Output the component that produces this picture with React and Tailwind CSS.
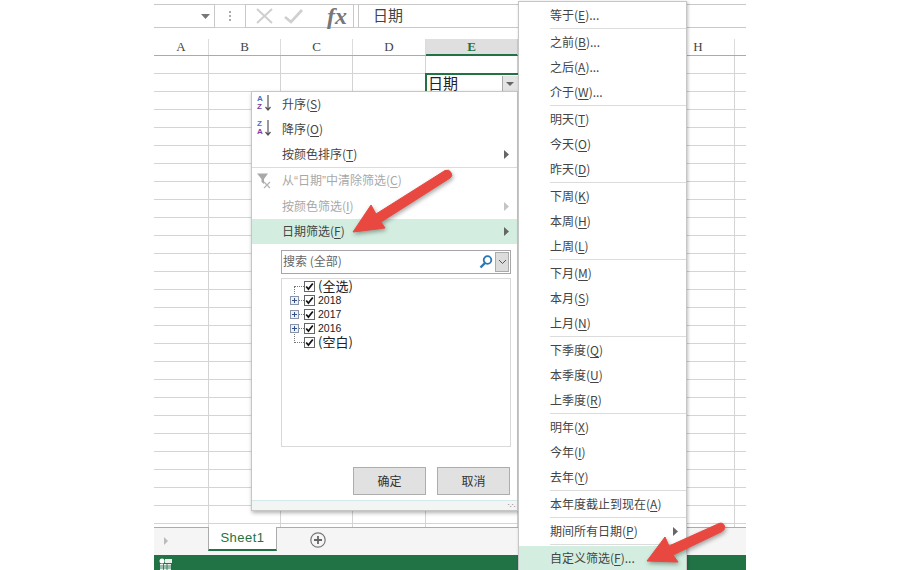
const FONT = "font-['Noto_Sans_CJK_SC','Noto_Sans',sans-serif]";

const columns = [
  ["A", "w-[55px]"], ["B", "w-[72px]"], ["C", "w-[72px]"], ["D", "w-[73px]"],
  ["E", "w-[92px]"], ["F", "w-[72px]"], ["G", "w-[72px]"], ["H", "w-[73px]"],
];

function Label({ pre, k, post = ")", extra = "" }) {
  return <span>{pre}(<span className="underline underline-offset-2 decoration-[0.5px]">{k}</span>{post}{extra}</span>;
}

function Tri({ className = "bg-[#666]" }) {
  return <span className={`absolute right-2 top-[8px] w-[5px] h-[9px] [clip-path:polygon(0_0,100%_50%,0_100%)] ${className}`} />;
}

function MenuItem({ pre, k, extra, icon, arrow, disabled, active, indent = "pl-[30px] pb-[2px]" }) {
  return (
    <div className={`relative h-[25px] shrink-0 flex items-center ${indent} text-xs ${disabled ? "text-[#a8a8a8]" : "text-[#444]"} ${active ? "bg-[#d3eee0]" : ""}`}>
      {icon}
      <Label pre={pre} k={k} extra={extra} />
      {arrow && <Tri className={disabled ? "bg-[#c4c4c4]" : "bg-[#666]"} />}
    </div>
  );
}

function Sep({ left = "ml-[31px]" }) {
  return <div className={`h-[2px] shrink-0 ${left} border-t border-[#dcdcdc]`} />;
}

function SortIcon({ top, bottom }) {
  return (
    <span className="absolute left-[5px] top-[2px] w-[16px] h-[19px] font-['Liberation_Sans',sans-serif] font-bold text-[8px] leading-[8px]">
      <span className="absolute left-0 top-[1px] text-[#4472c4]">{top}</span>
      <span className="absolute left-0 top-[9px] text-[#7a3fa8]">{bottom}</span>
      <svg className="absolute left-[7px] top-0" width="8" height="18" viewBox="0 0 8 18">
        <path d="M4 1v15M1.500 13l2.500 3 2.500-3" fill="none" stroke="#555" strokeWidth="1.200" />
      </svg>
    </span>
  );
}

function ClearIcon() {
  return (
    <svg className="absolute left-[4px] top-[3px]" width="18" height="18" viewBox="0 0 18 18">
      <path d="M1 1.500h11L8 7v5L5.500 10V7z" fill="#a9a9a9" />
      <path d="M8 10l6 6M14 10l-6 6" stroke="#b5b5b5" strokeWidth="1.300" fill="none" />
    </svg>
  );
}

function TreeRow({ label, plus, first, last, small }) {
  return (
    <div className="relative h-[14px] flex items-center pl-[22px]">
      {plus ? (
        <span className="absolute left-[8px] top-[3px] w-[9px] h-[9px] border border-[#8a94a8] bg-[#eef1f6]">
          <span className="absolute left-[1px] top-[3px] w-[5px] h-px bg-[#33508a]" />
          <span className="absolute left-[3px] top-[1px] w-px h-[5px] bg-[#33508a]" />
        </span>
      ) : (
        <span className={`absolute left-[12px] w-[10px] border-l border-b border-dotted border-[#777] ${first ? "top-[7px] h-[8px] border-t border-b-0" : last ? "top-[-1px] h-[9px]" : ""}`} />
      )}
      {plus && <span className="absolute left-[17px] top-[7px] w-[5px] border-t border-dotted border-[#777]" />}
      <span className="relative w-[11px] h-[11px] border border-[#666] bg-white shrink-0">
        <svg className="absolute left-0 top-0" width="9" height="9" viewBox="0 0 9 9">
          <path d="M1.200 4.500l2.200 2.600L7.800 1.400" fill="none" stroke="#111" strokeWidth="1.700" />
        </svg>
      </span>
      <span className={`ml-[3px] text-[#222] ${small ? "text-[10.5px] leading-none font-['Liberation_Sans',sans-serif]" : "text-[13px] leading-none pb-[2px]"}`}>{label}</span>
    </div>
  );
}

function FilterMenu() {
  const clearLabel = <>从<span className="font-['Liberation_Sans',sans-serif]">“</span>日期<span className="font-['Liberation_Sans',sans-serif]">”</span>中清除筛选</>;
  return (
    <div className={`absolute left-[251px] top-[91px] w-[267px] h-[420px] bg-white border border-[#c6c6c6] shadow-[1px_2px_4px_rgba(0,0,0,0.3)] flex flex-col ${FONT}`}>
      <MenuItem pre="升序" k="S" icon={<SortIcon top="A" bottom="Z" />} />
      <MenuItem pre="降序" k="O" icon={<SortIcon top="Z" bottom="A" />} />
      <MenuItem pre="按颜色排序" k="T" arrow />
      <Sep left="ml-0" />
      <MenuItem pre={clearLabel} k="C" disabled icon={<ClearIcon />} />
      <MenuItem pre="按颜色筛选" k="I" arrow disabled />
      <MenuItem pre="日期筛选" k="F" arrow active />
      <div className="ml-[29px] mt-[6px] w-[230px] h-[24px] border border-[#a6a6a6] flex items-center justify-between pl-px pr-px text-xs text-[#666]">
        <span className="pb-[2px]">搜索 (全部)</span>
        <span className="flex items-center gap-[1px]">
          <svg width="16" height="16" viewBox="0 0 16 16">
            <circle cx="9.500" cy="6" r="3.800" fill="none" stroke="#2a77b5" strokeWidth="1.800" />
            <path d="M7 9l-4.500 4.500" stroke="#2a77b5" strokeWidth="2.400" />
          </svg>
          <span className="w-[14px] h-[20px] bg-[#dcdcdc] border border-[#ababab] flex items-center justify-center">
            <svg width="9" height="6" viewBox="0 0 9 6"><path d="M1 1l3.500 3.500L8 1" fill="none" stroke="#555" /></svg>
          </span>
        </span>
      </div>
      <div className="ml-[29px] mt-[4px] w-[230px] h-[169px] border border-[#d9d9d9]">
        <TreeRow label="(全选)" first />
        <TreeRow label="2018" plus small />
        <TreeRow label="2017" plus small />
        <TreeRow label="2016" plus small />
        <TreeRow label="(空白)" last />
      </div>
      <div className="mt-[20px] pl-[101px] flex gap-[11px] text-xs text-[#333]">
        <button className="w-[73px] h-[28px] bg-[#e1e1e1] border border-[#adadad]">确定</button>
        <button className="w-[73px] h-[28px] bg-[#e1e1e1] border border-[#adadad]">取消</button>
      </div>
      <div className="relative mt-[5px] flex-1 bg-[#f3f5f5] border-t border-[#d5e8ea]">
        <span className="absolute right-[2px] bottom-[1px] text-[7px] leading-[7px] text-[#999] tracking-[-1px]">⠢⠢</span>
      </div>
    </div>
  );
}

function DateMenu() {
  const groups = [
    [["等于", "E", "..."]],
    [["之前", "B", "..."], ["之后", "A", "..."], ["介于", "W", "..."]],
    [["明天", "T"], ["今天", "O"], ["昨天", "D"]],
    [["下周", "K"], ["本周", "H"], ["上周", "L"]],
    [["下月", "M"], ["本月", "S"], ["上月", "N"]],
    [["下季度", "Q"], ["本季度", "U"], ["上季度", "R"]],
    [["明年", "X"], ["今年", "I"], ["去年", "Y"]],
    [["本年度截止到现在", "A"]],
    [["期间所有日期", "P", "", true]],
  ];
  return (
    <div className={`absolute left-[518px] top-[1px] w-[169px] h-[569px] bg-white border-x border-t border-[#c6c6c6] shadow-[1px_1px_3px_rgba(0,0,0,0.25)] flex flex-col pt-px ${FONT}`}>
      {groups.map((g, i) => (
        <div key={i} className="flex flex-col shrink-0">
          {g.map(([p, k, e, a]) => <MenuItem key={p} pre={p} k={k} extra={e} arrow={a} indent="pl-[31px] pb-px" />)}
          <Sep />
        </div>
      ))}
      <MenuItem pre="自定义筛选" k="F" extra="..." active indent="pl-[31px] pb-px" />
    </div>
  );
}

function Arrows() {
  return (
    <svg className="absolute left-0 top-0 drop-shadow-[1px_2px_2px_rgba(0,0,0,0.35)]" width="900" height="570" viewBox="0 0 900 570">
      <path d="M353 232L371 205L376 214L445 170.500Q449 169 451 172.500Q453 176 450 178L381 222L385 228Z" fill="#e8483f" stroke="#e8483f" strokeLinejoin="round" />
      <path d="M647 561L665 537L669 546L719 523.500Q723 522 724.500 526Q725 530 722 531.500L673 555L678 562Z" fill="#e8483f" stroke="#e8483f" strokeLinejoin="round" />
    </svg>
  );
}

function Toolbar() {
  return (
    <div className="h-[39px] shrink-0 pt-[4px]">
      <div className="h-[24px] flex border-y border-[#d0d0d0]">
        <div className="w-[61px] border-r border-[#c8c8c8] relative bg-white -mt-px -mb-px border-y">
          <span className="absolute right-[4px] top-[9px] w-[9px] h-[5px] bg-[#777] [clip-path:polygon(0_0,100%_0,50%_100%)]" />
        </div>
        <div className="w-[30px] flex flex-col items-center justify-center gap-[2px]">
          <span className="w-[2px] h-[2px] bg-[#aaa]" /><span className="w-[2px] h-[2px] bg-[#aaa]" /><span className="w-[2px] h-[2px] bg-[#aaa]" />
        </div>
        <div className="w-[109px] -my-px border border-[#c8c8c8] flex items-center pl-[8px] bg-white">
          <svg width="22" height="18" viewBox="0 0 22 18"><path d="M3 2l15 14M18 2L3 16" stroke="#cfcfcf" strokeWidth="2" /></svg>
          <svg className="ml-[7px]" width="22" height="16" viewBox="0 0 22 16"><path d="M2 9l6 5L19 2" fill="none" stroke="#cfcfcf" strokeWidth="2.600" /></svg>
          <span className="ml-[22px] font-['Liberation_Serif',serif] italic font-bold text-[24px] leading-none text-[#777]">fx</span>
        </div>
        <div className={`ml-[4px] flex-1 -my-px border border-[#c8c8c8] border-r-0 pl-[14px] pb-[2px] flex items-center text-[15px] text-[#444] ${FONT}`}>日期</div>
      </div>
    </div>
  );
}

function Sheet() {
  return (
    <div className="flex-1 overflow-hidden min-h-0">
      <div className="flex h-[17px] border-b border-[#ababab]">
        {columns.map(([c, w]) => (
          <div key={c} className={`${w} shrink-0 flex items-center justify-center border-r text-[13px] font-['Liberation_Serif',serif] ${c === "E" ? "bg-[#dfdfdf] border-[#d0d0d0] text-[#217346] font-bold border-b-2 border-b-[#217346] h-[17px]" : "border-[#dcdcdc] text-[#444]"}`}>{c}</div>
        ))}
      </div>
      {Array.from({ length: 27 }, (_, r) => (
        <div key={r} className="flex h-[18px] border-b border-[#d4d4d4]">
          {columns.map(([c, w]) => (
            <div key={c} className={`${w} shrink-0 border-r border-[#d4d4d4] relative`}>
              {r === 1 && c === "E" && (
                <div className={`absolute -left-px -top-px w-[100px] h-[19px] border-t-2 border-l-2 border-[#217346] bg-white flex items-center pl-[1px] pb-[3px] text-[15px] leading-none text-[#222] ${FONT}`}>
                  日期
                  <span className="absolute left-[75px] top-[1px] w-[16px] h-[16px] bg-[#e4e4e4] border-l border-[#aaa]">
                    <span className="absolute left-[3px] top-[6px] w-[8px] h-[4px] bg-[#666] [clip-path:polygon(0_0,100%_0,50%_100%)]" />
                  </span>
                </div>
              )}
            </div>
          ))}
        </div>
      ))}
    </div>
  );
}

function Tabs() {
  return (
    <div className="h-[28px] shrink-0 bg-[#f5f5f5] border-t border-[#ababab] flex relative">
      <span className="ml-[10px] mt-[9px] w-[4px] h-[8px] bg-[#bbb] [clip-path:polygon(0_0,100%_50%,0_100%)]" />
      <div className="ml-[40px] w-[69px] h-[24px] -mt-px bg-white border-x border-[#ababab] border-t-white border-b-2 border-b-[#217346] flex items-center justify-center text-[13px] text-[#217346] font-['Liberation_Sans',sans-serif] tracking-[0.5px]">Sheet1</div>
      <svg className="ml-[33px] mt-[4px]" width="16" height="16" viewBox="0 0 16 16">
        <circle cx="8" cy="8" r="7.200" fill="none" stroke="#777" strokeWidth="1.200" />
        <path d="M8 4v8M4 8h8" stroke="#666" strokeWidth="1.800" />
      </svg>
    </div>
  );
}

function Status() {
  return (
    <div className="h-[15px] shrink-0 bg-[#217346] pl-[5px] pt-[3px]">
      <svg width="13" height="12" viewBox="0 0 13 12">
        <circle cx="3" cy="3" r="2.500" fill="#fff" />
        <path d="M1 6h11v6H1zM6 1h7v4H6z" fill="#e8f1ec" />
        <path d="M1 8h11M1 10h11M4.500 6v6M8 6v6" stroke="#217346" strokeWidth="0.800" />
      </svg>
    </div>
  );
}

export default function App() {
  return (
    <div className="relative w-[900px] h-[570px] bg-white overflow-hidden">
      <div className="w-[592px] h-full ml-[154px] flex flex-col">
        <Toolbar />
        <Sheet />
        <Tabs />
        <Status />
      </div>
      <FilterMenu />
      <DateMenu />
      <Arrows />
    </div>
  );
}
